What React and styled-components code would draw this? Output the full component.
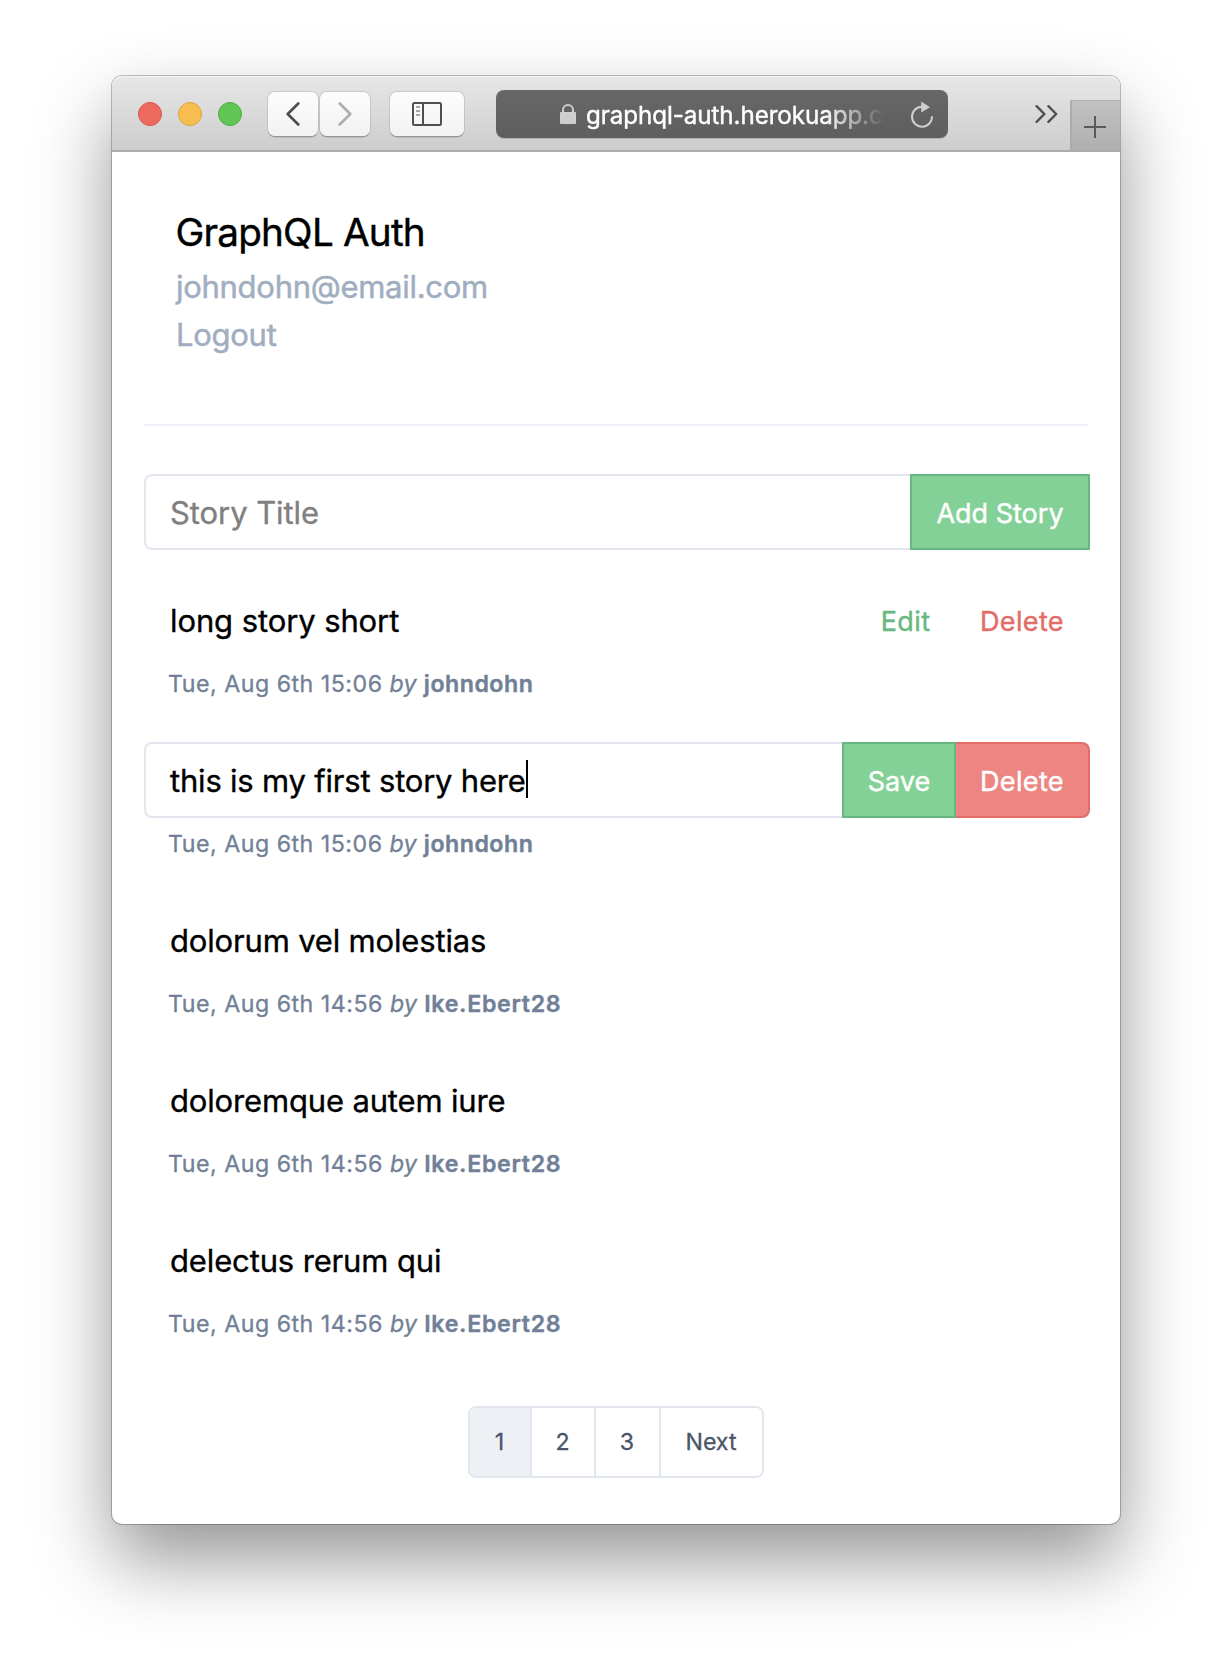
import React from "react";
import styled, { createGlobalStyle } from "styled-components";

const GlobalStyle = createGlobalStyle`
  * { box-sizing: border-box; }
  body {
    margin: 0;
    background: #fff;
    font-family: Inter, "Liberation Sans", sans-serif;
    color: #000;
    -webkit-font-smoothing: antialiased;
  }
  button, input { font-family: inherit; margin: 0; }
`;

const Desktop = styled.div`
  min-height: 1672px;
  padding: 76px 112px 148px;
  overflow: hidden;
`;

const Window = styled.div`
  display: flex;
  flex-direction: column;
  height: 1448px;
  border-radius: 10px;
  background: #fff;
  box-shadow: 0 0 0 1px rgba(0, 0, 0, 0.24), 0 36px 76px rgba(0, 0, 0, 0.42);
`;

const Toolbar = styled.div`
  display: flex;
  align-items: center;
  height: 76px;
  flex: none;
  padding: 2px 0 0 26px;
  border-bottom: 2px solid #acacac;
  border-radius: 10px 10px 0 0;
  background: linear-gradient(#e7e7e7, #cdcdcd);
  box-shadow: inset 0 1px 0 #f6f6f6;
`;

const Lights = styled.div`
  display: flex;
  gap: 16px;
  margin-right: 26px;
`;

const Light = styled.span`
  width: 24px;
  height: 24px;
  border-radius: 50%;
  background: ${(p) => p.$fill};
  border: 1px solid ${(p) => p.$edge};
`;

const NavGroup = styled.div`
  display: flex;
  gap: 2px;
  margin-right: 20px;
`;

const ToolButton = styled.button`
  display: flex;
  align-items: center;
  justify-content: center;
  width: ${(p) => p.$width}px;
  height: 44px;
  padding: 0;
  border: 0;
  border-radius: 7px;
  background: linear-gradient(#fdfdfd, #f2f2f2);
  box-shadow: 0 0 0 1px rgba(0, 0, 0, 0.1), 0 1.5px 0 rgba(0, 0, 0, 0.2);
`;

const AddressBar = styled.div`
  display: flex;
  align-items: center;
  width: 452px;
  height: 48px;
  margin: 0 87px 0 32px;
  padding: 0 15px 0 64px;
  border-radius: 8px;
  background: linear-gradient(#676767, #5e5e5e);
  box-shadow: 0 1px 0 rgba(0, 0, 0, 0.14);
`;

const Address = styled.span`
  flex: 1;
  margin-left: 10px;
  overflow: hidden;
  white-space: nowrap;
  font-size: 24.2px;
  letter-spacing: -0.08px;
  line-height: 36px;
  padding-top: 3px;
  color: #fff;
  -webkit-text-stroke: 0.4px #fff;
  mask-image: linear-gradient(90deg, #000 238px, transparent 298px);
`;

const NewTab = styled.button`
  display: flex;
  align-items: center;
  justify-content: center;
  align-self: flex-end;
  width: 50px;
  height: 50px;
  margin-left: auto;
  padding: 2px 2px 0 0;
  border: 0;
  border-left: 2px solid #acacac;
  border-top: 1px solid #b0b0b0;
  background: linear-gradient(#c1c1c1, #b0b0b0);
`;

const Page = styled.main`
  display: flex;
  flex-direction: column;
  padding: 0 30px 0 32px;
`;

const Header = styled.header`
  display: flex;
  flex-direction: column;
  height: 274px;
  margin-right: 2px;
  padding: 50px 32px 0;
  border-bottom: 2px solid #edf1f7;
`;

const Title = styled.h1`
  margin: 0 0 1px -0.5px;
  font-size: 38.7px;
  line-height: 60px;
  font-weight: 400;
  letter-spacing: -0.82px;
  -webkit-text-stroke: 0.4px #000;
`;

const HeaderLine = styled.a`
  font-size: 31px;
  line-height: 48px;
  letter-spacing: -0.28px;
  color: #a0aec0;
  -webkit-text-stroke: 0.5px #a0aec0;
`;

const Form = styled.form`
  display: flex;
  height: 76px;
  margin: 48px 0 32px;
`;

const Field = styled.div`
  display: flex;
  align-items: center;
  flex: 1;
  padding: 0 0 0 24px;
  border: 2px solid ${(p) => (p.$plain ? "transparent" : "#e2e7ef")};
  border-right: 0;
  border-radius: 8px 0 0 8px;
  font-size: 31px;
  letter-spacing: ${(p) => p.$tracking || 0}px;
  color: ${(p) => (p.$placeholder ? "#808080" : "#000")};
  -webkit-text-stroke: 0.35px currentColor;
  white-space: nowrap;
`;

const Caret = styled.span`
  width: 2px;
  height: 38px;
  margin: 0 0 2px 0.6px;
  background: #000;
`;

const tones = {
  green: { fill: "#84d197", line: "#68b87f" },
  red: { fill: "#ed8682", line: "#e36c69" },
};

const Action = styled.button`
  flex: none;
  width: ${(p) => p.$width}px;
  padding: 2px 0 0;
  border: 2px solid ${(p) => (p.$plain ? "transparent" : tones[p.$tone].line)};
  border-left-width: ${(p) => (p.$joined ? 0 : 2)}px;
  border-radius: ${(p) => (p.$joined ? "0 8px 8px 0" : "0")};
  background: ${(p) => (p.$plain ? "transparent" : tones[p.$tone].fill)};
  color: ${(p) => (p.$plain ? tones[p.$tone].line : "#fff")};
  font-size: 27px;
  letter-spacing: ${(p) => p.$tracking || 0}px;
  -webkit-text-stroke: 0.4px currentColor;
`;

const Story = styled.article`
  height: 160px;
`;

const StoryRow = styled.div`
  display: flex;
  height: 76px;
`;

const Meta = styled.div`
  margin: 8px 0 0 24px;
  font-size: 23.2px;
  line-height: 36px;
  letter-spacing: 0.5px;
  color: #718096;
  -webkit-text-stroke: 0.3px #718096;
  white-space: nowrap;

  b { font-weight: 600; letter-spacing: ${(p) => p.$tracking}px; -webkit-text-stroke: 0.4px #718096; }
  i { letter-spacing: 0.2px; }
`;

const Pager = styled.nav`
  display: flex;
  align-self: center;
  height: 72px;
  margin: 24px 2px 0 0;
  border: 2px solid #e2e7ef;
  border-radius: 8px;
  overflow: hidden;
`;

const PageLink = styled.a`
  display: flex;
  align-items: center;
  justify-content: center;
  width: ${(p) => p.$width}px;
  padding-right: 1px;
  border-right: ${(p) => (p.$last ? 0 : 2)}px solid #e2e7ef;
  background: ${(p) => (p.$active ? "#edf1f6" : "#fff")};
  color: #4a5568;
  font-size: 23.2px;
  -webkit-text-stroke: 0.3px #4a5568;
`;

const Chevron = ({ left, color }) => (
  <svg width="14" height="24" viewBox="0 0 14 24" fill="none" stroke={color} strokeWidth="2.6" strokeLinecap="round" strokeLinejoin="round">
    <path d={left ? "M12.3 1.5 1.7 12l10.6 10.5" : "M1.7 1.5 12.3 12 1.7 22.5"} />
  </svg>
);

const SidebarIcon = () => (
  <svg width="30" height="24" viewBox="0 0 30 24" fill="none" stroke="#4f4f4f" strokeWidth="2">
    <rect x="1" y="1" width="28" height="22" rx="1.5" />
    <path d="M11 1v22" />
    <path d="M4 5h4M4 9h4M4 13h4" stroke="#8a8a8a" strokeWidth="1.7" />
  </svg>
);

const LockIcon = () => (
  <svg width="16" height="20" viewBox="0 0 16 20">
    <path d="M3 9V6a5 5 0 0 1 10 0v3" fill="none" stroke="#cfcfcf" strokeWidth="2" />
    <rect y="8" width="16" height="12" rx="1" fill="#cfcfcf" />
  </svg>
);

const ReloadIcon = () => (
  <svg width="22" height="27" viewBox="0 0 22 27">
    <path d="M11 5.7A10 10 0 1 0 21 15.2" fill="none" stroke="#cfcfcf" strokeWidth="2" />
    <path d="M10.2.5 19 6.2l-8.8 5.2z" fill="#cfcfcf" />
  </svg>
);

const MoreIcon = () => (
  <svg width="23" height="18" viewBox="0 0 23 18" fill="none" stroke="#505050" strokeWidth="2.4" strokeLinecap="round" strokeLinejoin="round">
    <path d="M1.6 1.2 9.4 9l-7.8 7.8M13.4 1.2 21.2 9l-7.8 7.8" />
  </svg>
);

const PlusIcon = () => (
  <svg width="22" height="22" viewBox="0 0 22 22" stroke="#5a5a5a" strokeWidth="2">
    <path d="M11 0v22M0 11h22" />
  </svg>
);

const stories = [
  { title: "long story short", time: "15:06", author: "johndohn", own: true, tracking: -0.1 },
  { title: "this is my first story here", time: "15:06", author: "johndohn", own: true, editing: true, tracking: -0.2 },
  { title: "dolorum vel molestias", time: "14:56", author: "Ike.Ebert28", tracking: -0.17 },
  { title: "doloremque autem iure", time: "14:56", author: "Ike.Ebert28", tracking: -0.16 },
  { title: "delectus rerum qui", time: "14:56", author: "Ike.Ebert28", tracking: -0.14 },
];

const StoryItem = ({ title, time, author, own, editing, tracking }) => (
  <Story>
    <StoryRow>
      <Field $plain={!editing} $tracking={tracking}>
        {title}
        {editing && <Caret />}
      </Field>
      {own && (
        <>
          <Action $tone="green" $plain={!editing} $width={editing ? 114 : 101} $tracking={editing ? 0 : 0.4}>
            {editing ? "Save" : "Edit"}
          </Action>
          <Action $tone="red" $plain={!editing} $joined $width={134} $tracking={0.35}>
            Delete
          </Action>
        </>
      )}
    </StoryRow>
    <Meta $tracking={own ? 0.5 : 0.7}>
      Tue, Aug 6th {time} <i>by</i> <b>{author}</b>
    </Meta>
  </Story>
);

export default function App() {
  return (
    <Desktop>
      <GlobalStyle />
      <Window>
        <Toolbar>
          <Lights>
            <Light $fill="#ed6a5f" $edge="#d9564b" />
            <Light $fill="#f6be4f" $edge="#dba33b" />
            <Light $fill="#62c655" $edge="#4fac41" />
          </Lights>
          <NavGroup>
            <ToolButton $width={50} aria-label="Back"><Chevron left color="#4d4d4d" /></ToolButton>
            <ToolButton $width={50} aria-label="Forward"><Chevron color="#adadad" /></ToolButton>
          </NavGroup>
          <ToolButton $width={74} aria-label="Sidebar"><SidebarIcon /></ToolButton>
          <AddressBar>
            <LockIcon />
            <Address>graphql-auth.herokuapp.com</Address>
            <ReloadIcon />
          </AddressBar>
          <MoreIcon />
          <NewTab aria-label="New tab"><PlusIcon /></NewTab>
        </Toolbar>
        <Page>
          <Header>
            <Title>GraphQL Auth</Title>
            <HeaderLine>johndohn@email.com</HeaderLine>
            <HeaderLine>Logout</HeaderLine>
          </Header>
          <Form>
            <Field $placeholder $tracking={-0.08}>Story Title</Field>
            <Action type="button" $tone="green" $width={180}>Add Story</Action>
          </Form>
          {stories.map((s) => (
            <StoryItem key={s.title} {...s} />
          ))}
          <Pager>
            <PageLink $width={62} $active>1</PageLink>
            <PageLink $width={64}>2</PageLink>
            <PageLink $width={65}>3</PageLink>
            <PageLink $width={101} $last>Next</PageLink>
          </Pager>
        </Page>
      </Window>
    </Desktop>
  );
}
